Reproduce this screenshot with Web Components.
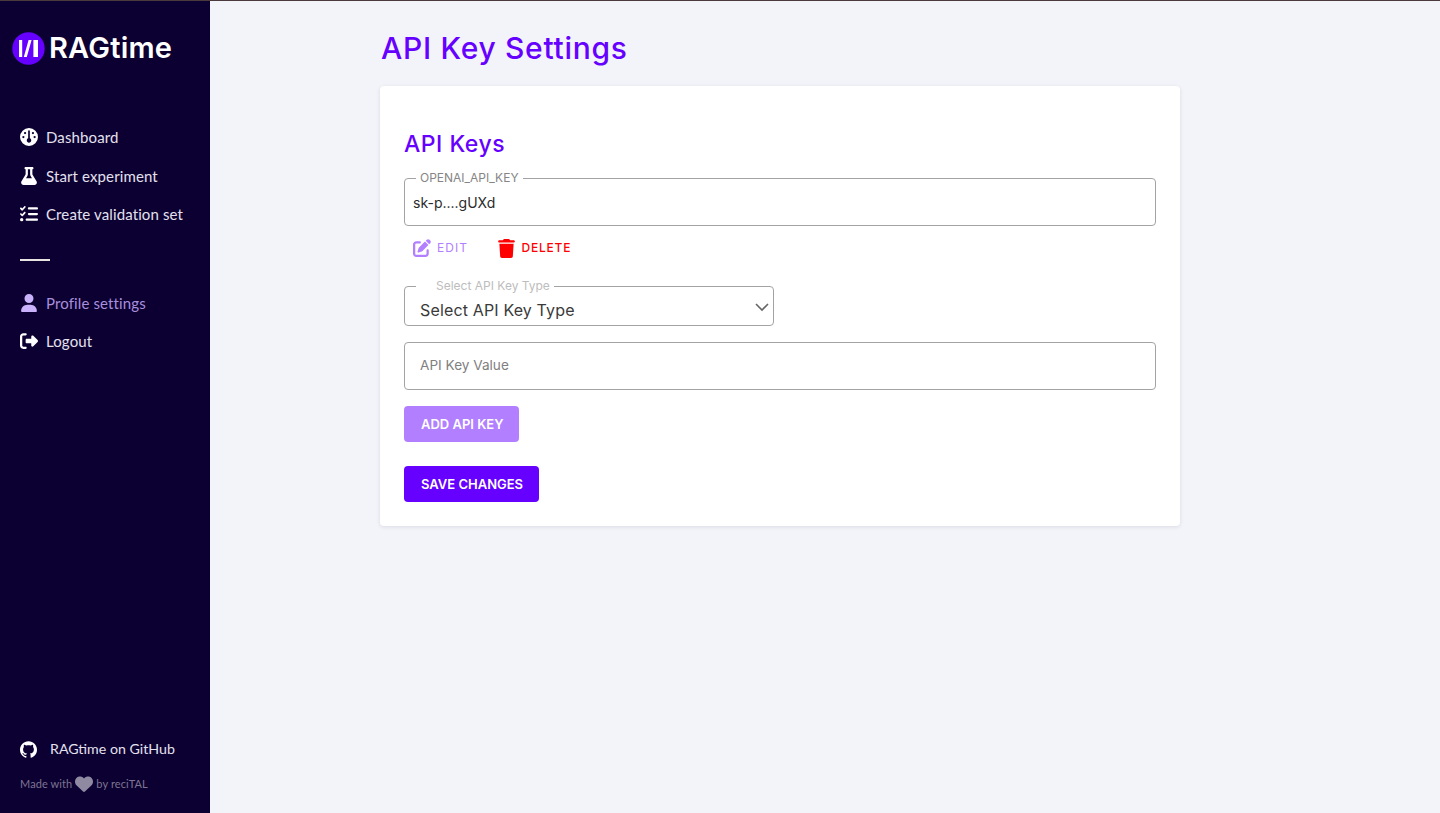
<!DOCTYPE html>
<html lang="en">
<head>
<meta charset="utf-8">
<title>API Key Settings</title>
<style>
html, body { margin: 0; padding: 0; height: 100%; }
body { font-family: Inter, "Liberation Sans", sans-serif; background: #f3f4f9; }
</style>
</head>
<body>
<app-shell>
  <side-bar slot="side">
    <nav-item icon="gauge">Dashboard</nav-item>
    <nav-item icon="flask">Start experiment</nav-item>
    <nav-item icon="list">Create validation set</nav-item>
    <nav-item icon="user" slot="lower" active>Profile settings</nav-item>
    <nav-item icon="logout" slot="lower">Logout</nav-item>
  </side-bar>
  <settings-page>
    <key-card>
      <out-field label="OPENAI_API_KEY">sk-p....gUXd</out-field>
      <key-actions></key-actions>
      <type-select label="Select API Key Type">Select API Key Type</type-select>
      <value-input placeholder="API Key Value"></value-input>
      <flat-button tone="light">ADD API KEY</flat-button>
      <flat-button class="save">SAVE CHANGES</flat-button>
    </key-card>
  </settings-page>
</app-shell>

<script>
const ICONS = {
  gauge: ['0 0 512 512', 'M0 256a256 256 0 1 1 512 0A256 256 0 1 1 0 256zm320 96c0-26.9-16.5-49.9-40-59.3V88c0-13.3-10.7-24-24-24s-24 10.7-24 24V292.7c-23.5 9.5-40 32.5-40 59.3c0 35.3 28.7 64 64 64s64-28.7 64-64zM144 176a32 32 0 1 0 0-64 32 32 0 1 0 0 64zm-16 80a32 32 0 1 0 -64 0 32 32 0 1 0 64 0zm288 32a32 32 0 1 0 0-64 32 32 0 1 0 0 64zM400 144a32 32 0 1 0 -64 0 32 32 0 1 0 64 0z'],
  flask: ['0 0 448 512', 'M288 0H160 128C110.3 0 96 14.3 96 32s14.3 32 32 32V196.8c0 11.8-3.3 23.5-9.5 33.5L10.3 406.2C3.6 417.2 0 429.7 0 442.6C0 480.9 31.1 512 69.4 512H378.6c38.3 0 69.4-31.1 69.4-69.4c0-12.8-3.6-25.4-10.3-36.4L329.5 230.4c-6.2-10.1-9.5-21.7-9.5-33.5V64c17.7 0 32-14.3 32-32s-14.3-32-32-32H288zM192 196.8V64h64V196.8c0 23.7 6.6 46.9 19 67.1L309.5 320h-171L173 263.9c12.4-20.2 19-43.4 19-67.1z'],
  list: ['0 0 512 512', 'M152.1 38.2c9.9 8.9 10.7 24 1.8 33.9l-72 80c-4.4 4.9-10.6 7.8-17.2 7.9s-12.9-2.4-17.6-7L7 113C-2.3 103.6-2.3 88.4 7 79s24.6-9.4 33.9 0l22.1 22.1 55.1-61.2c8.9-9.9 24-10.7 33.9-1.8zm0 160c9.9 8.9 10.7 24 1.8 33.9l-72 80c-4.4 4.9-10.6 7.8-17.2 7.9s-12.9-2.4-17.6-7L7 273c-9.4-9.4-9.4-24.6 0-33.9s24.6-9.4 33.9 0l22.1 22.1 55.1-61.2c8.9-9.9 24-10.7 33.9-1.8zM224 96c0-17.7 14.3-32 32-32H480c17.7 0 32 14.3 32 32s-14.3 32-32 32H256c-17.7 0-32-14.3-32-32zm0 160c0-17.7 14.3-32 32-32H480c17.7 0 32 14.3 32 32s-14.3 32-32 32H256c-17.7 0-32-14.3-32-32zM160 416c0-17.7 14.3-32 32-32H480c17.7 0 32 14.3 32 32s-14.3 32-32 32H192c-17.7 0-32-14.3-32-32zM48 368a48 48 0 1 1 0 96 48 48 0 1 1 0-96z'],
  user: ['0 0 448 512', 'M224 256A128 128 0 1 0 224 0a128 128 0 1 0 0 256zm-45.7 48C79.8 304 0 383.8 0 482.3C0 498.7 13.3 512 29.7 512H418.3c16.4 0 29.7-13.3 29.7-29.7C448 383.8 368.2 304 269.7 304H178.3z'],
  logout: ['0 0 512 512', 'M377.9 105.9L500.7 228.7c7.2 7.2 11.3 17.1 11.3 27.3s-4.1 20.1-11.3 27.3L377.9 406.1c-6.4 6.4-15 9.9-24 9.9c-18.7 0-33.9-15.2-33.9-33.9l0-62.1-128 0c-17.7 0-32-14.3-32-32l0-64c0-17.7 14.3-32 32-32l128 0 0-62.1c0-18.7 15.2-33.9 33.9-33.9c9 0 17.6 3.6 24 9.9zM160 96L96 96c-17.7 0-32 14.3-32 32l0 256c0 17.7 14.3 32 32 32l64 0c17.7 0 32 14.3 32 32s-14.3 32-32 32l-64 0c-53 0-96-43-96-96L0 128C0 75 43 32 96 32l64 0c17.7 0 32 14.3 32 32s-14.3 32-32 32z'],
  edit: ['0 0 512 512', 'M471.6 21.7c-21.9-21.9-57.3-21.9-79.2 0L362.3 51.7l97.9 97.9 30.1-30.1c21.9-21.9 21.9-57.3 0-79.2L471.6 21.7zm-299.2 220c-6.1 6.1-10.8 13.6-13.5 21.9l-29.6 88.8c-2.9 8.6-.6 18.1 5.8 24.6s15.9 8.7 24.6 5.8l88.8-29.6c8.2-2.7 15.7-7.4 21.9-13.5L437.7 172.3 339.7 74.3 172.4 241.7zM96 64C43 64 0 107 0 160V416c0 53 43 96 96 96H352c53 0 96-43 96-96V320c0-17.7-14.3-32-32-32s-32 14.3-32 32v96c0 17.7-14.3 32-32 32H96c-17.7 0-32-14.3-32-32V160c0-17.7 14.3-32 32-32h96c17.7 0 32-14.3 32-32s-14.3-32-32-32H96z'],
  trash: ['0 0 448 512', 'M135.2 17.7L128 32H32C14.3 32 0 46.3 0 64S14.3 96 32 96H416c17.7 0 32-14.3 32-32s-14.3-32-32-32H320l-7.2-14.3C307.4 6.8 296.3 0 284.2 0H163.8c-12.1 0-23.2 6.8-28.6 17.7zM416 128H32L53.2 467c1.6 25.3 22.6 45 47.9 45H346.9c25.3 0 46.3-19.7 47.9-45L416 128z'],
  heart: ['0 0 512 512', 'M47.6 300.4L228.3 469.1c7.5 7 17.4 10.9 27.7 10.9s20.2-3.9 27.7-10.9L464.4 300.4c30.4-28.3 47.6-68 47.6-109.5v-5.8c0-69.9-50.5-129.5-119.4-141C347 36.5 300.6 51.4 268 84L256 96 244 84c-32.6-32.6-79-47.5-124.6-39.9C50.5 55.6 0 115.2 0 185.1v5.8c0 41.5 17.2 81.2 47.6 109.5z'],
  github: ['0 0 24 24', 'M12 .297c-6.63 0-12 5.373-12 12 0 5.303 3.438 9.8 8.205 11.385.6.113.82-.258.82-.577 0-.285-.01-1.04-.015-2.04-3.338.724-4.042-1.61-4.042-1.61C4.422 18.07 3.633 17.7 3.633 17.7c-1.087-.744.084-.729.084-.729 1.205.084 1.838 1.236 1.838 1.236 1.07 1.835 2.809 1.305 3.495.998.108-.776.417-1.305.76-1.605-2.665-.3-5.466-1.332-5.466-5.93 0-1.31.465-2.38 1.235-3.22-.135-.303-.54-1.523.105-3.176 0 0 1.005-.322 3.3 1.23.96-.267 1.98-.399 3-.405 1.02.006 2.04.138 3 .405 2.28-1.552 3.285-1.23 3.285-1.23.645 1.653.24 2.873.12 3.176.765.84 1.23 1.91 1.23 3.22 0 4.61-2.805 5.625-5.475 5.92.42.36.81 1.096.81 2.22 0 1.606-.015 2.896-.015 3.286 0 .315.21.69.825.57C20.565 22.092 24 17.592 24 12.297c0-6.627-5.373-12-12-12']
};

function svgIcon(name, size) {
  const [box, d] = ICONS[name];
  return `<svg width="${size}" height="${size}" viewBox="${box}" fill="currentColor" aria-hidden="true"><path d="${d}"/></svg>`;
}

// small helper, every element below is just a template + open shadow root
function define(tag, html) {
  customElements.define(tag, class extends HTMLElement {
    constructor() {
      super();
      this.attachShadow({ mode: 'open' });
    }
    connectedCallback() {
      this.shadowRoot.innerHTML = typeof html === 'function' ? html(this) : html;
    }
  });
}

define('app-shell', `
<style>
:host { display: flex; min-height: 813px; box-sizing: border-box; border-top: 1px solid #4b3a3c; }
.side { flex: 0 0 210px; display: flex; }
.main { flex: 1; min-width: 0; }
</style>
<div class="side"><slot name="side"></slot></div>
<div class="main"><slot></slot></div>
`);

define('side-bar', `
<style>
:host { display: flex; flex-direction: column; width: 210px; height: 812px; background: #0c0032; color: #fff; box-sizing: border-box; }
.logo { display: flex; align-items: center; gap: 4px; padding: 30px 0 0 12px; height: 34px; }
.logo span { font: 600 29px/34px Inter, sans-serif; letter-spacing: .2px; color: #fff; }
nav { display: flex; flex-direction: column; margin-top: 53px; }
.sep { width: 30px; height: 2px; background: #e8e4e0; margin: 25px 0 0 20px; }
.foot { margin-top: auto; padding: 0 0 21px 20px; font-family: Lato, sans-serif; }
.git { display: flex; align-items: center; gap: 13px; font-size: 14.2px; line-height: 20px; color: #e4e1ee; height: 20px; }
.git svg { width: 17px; height: 17px; color: #fff; }
.made { display: flex; align-items: center; margin-top: 17px; font-size: 11px; letter-spacing: .1px; line-height: 16px; color: #7c7591; height: 16px; }
.made svg { width: 18px; height: 18px; margin: 0 3px 0 3px; color: #8f8aa2; }
</style>
<div class="logo">
  <svg width="33" height="33" viewBox="0 0 33 33"><circle cx="16.5" cy="16.5" r="16.2" fill="#6600ff"/><path d="M7 8h3.2v17H7zM11.8 25l4.8-17h3l-4.8 17zM21.4 8h4.6v17h-4.6z" fill="#fff"/></svg>
  <span>RAGtime</span>
</div>
<nav><slot></slot></nav>
<div class="sep"></div>
<nav style="margin-top:23px"><slot name="lower"></slot></nav>
<div class="foot">
  <div class="git">${svgIcon('github', 17)}<span>RAGtime on GitHub</span></div>
  <div class="made"><span>Made with</span>${svgIcon('heart', 18)}<span>by reciTAL</span></div>
</div>
`);

define('nav-item', el => `
<style>
:host { display: flex; align-items: center; height: 38.5px; padding-left: 20px; gap: 8px; font: 15px/20px Lato, sans-serif; letter-spacing: .12px; color: ${el.hasAttribute('active') ? '#a88fdc' : '#e4e1ee'}; }
.ic { width: 18px; display: flex; justify-content: center; color: ${el.hasAttribute('active') ? '#c9b2fb' : '#fff'}; }
</style>
<span class="ic">${svgIcon(el.getAttribute('icon'), 18)}</span><slot></slot>
`);

define('settings-page', `
<style>
:host { display: block; width: 800px; margin-left: 170px; }
h1 { margin: 0; padding: 27px 0 0 1px; height: 58px; font: 500 30px/40px Inter, sans-serif; letter-spacing: .7px; color: #6600ff; }
</style>
<h1>API Key Settings</h1>
<slot></slot>
`);

define('key-card', `
<style>
:host { display: block; background: #fff; border-radius: 4px; box-shadow: 0 1px 4px rgba(20,20,60,.1); padding: 46px 24px 24px; box-sizing: border-box; height: 440px; }
h2 { margin: 0 0 15px; font: 500 23px/24px Inter, sans-serif; letter-spacing: .5px; color: #6600ff; }
.stack { display: flex; flex-direction: column; align-items: flex-start; }
</style>
<h2>API Keys</h2>
<div class="stack"><slot></slot></div>
`);

const OUTLINE = `
fieldset { margin: 0; padding: 0; border: 1px solid #a3a3a3; border-radius: 4px; box-sizing: border-box; }
legend { padding: 0 4px; margin-left: 11px; font: 12px/14px Inter, sans-serif; color: #858585; }
`;

define('out-field', el => `
<style>
:host { display: block; width: 752px; }
${OUTLINE}
fieldset { height: 55px; }
.v { padding: 8px 8px 0; font: 14px/20px Inter, sans-serif; color: #2b2b2b; }
</style>
<fieldset><legend>${el.getAttribute('label')}</legend><div class="v"><slot></slot></div></fieldset>
`);

define('key-actions', `
<style>
:host { display: flex; align-items: center; height: 44px; padding-left: 9px; font: 400 12px/16px Inter, sans-serif; letter-spacing: 1.05px; }
span.a { display: flex; align-items: center; gap: 6px; }
.edit { color: #b17fff; width: 83.5px; }
.del { color: #ff0000; gap: 7px; font-weight: 500; letter-spacing: .8px; }
</style>
<span class="a edit">${svgIcon('edit', 18)}<span>EDIT</span></span>
<span class="a del">${svgIcon('trash', 19)}<span>DELETE</span></span>
`);

define('type-select', el => `
<style>
:host { display: block; width: 370px; margin-top: 9px; }
${OUTLINE}
fieldset { height: 47px; position: relative; }
legend { margin-left: 11px; padding: 0 4px 0 20px; color: #bdbdbd; }
.v { padding: 5px 15px 0; font: 16px/24px Inter, sans-serif; letter-spacing: .15px; color: #3a3a3a; }
svg { position: absolute; right: 3px; top: 6px; }
</style>
<fieldset><legend>${el.getAttribute('label')}</legend><div class="v"><slot></slot></div>
<svg width="16" height="16" viewBox="0 0 16 16" fill="none" stroke="#666" stroke-width="1.6"><path d="M2 5l6 6 6-6"/></svg></fieldset>
`);

define('value-input', el => `
<style>
:host { display: block; width: 752px; height: 48px; margin-top: 16px; box-sizing: border-box; border: 1px solid #a3a3a3; border-radius: 4px; padding: 0 15px; font: 13.6px/44px Inter, sans-serif; color: #808080; }
</style>
${el.getAttribute('placeholder')}
`);

define('flat-button', el => `
<style>
:host { display: inline-flex; align-items: center; height: 36px; padding: 0 15.5px 0 17px; box-sizing: border-box; margin-top: ${el.classList.contains('save') ? 24 : 16}px; border-radius: 4px; background: ${el.getAttribute('tone') === 'light' ? '#b17fff' : '#6600ff'}; color: #fff; font: 600 13px/16px Inter, sans-serif; }
</style>
<slot></slot>
`);
</script>
</body>
</html>
